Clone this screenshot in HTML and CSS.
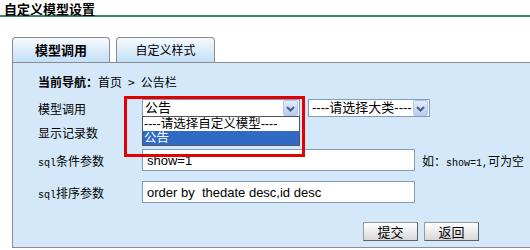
FILE: index.html
```html
<!DOCTYPE html>
<html lang="zh-CN">
<head>
    <meta charset="UTF-8">
    <meta name="viewport" content="width=device-width, initial-scale=1.0">
    <title>自定义模型设置</title>
    <link rel="stylesheet" href="styles.css">
</head>
<body>
    <h1 class="page-title">自定义模型设置</h1>

    <div class="tabs">
        <div class="tab active">模型调用</div>
        <div class="tab">自定义样式</div>
    </div>

    <div class="panel">
        <div class="nav"><b>当前导航：</b>首页<span class="sep">&gt;</span>公告栏</div>

        <div class="form">
            <div class="label">模型调用</div>
            <div class="field">
                <div class="select open">
                    <span>公告</span>
                    <span class="arrow">
                        <svg width="15" height="14" viewBox="0 0 15 14"><path d="M4 5 L7.5 8.5 L11 5" fill="none" stroke="#4a5f86" stroke-width="2"/></svg>
                    </span>
                    <ul class="options">
                        <li>----请选择自定义模型----</li>
                        <li class="selected">公告</li>
                    </ul>
                    <div class="mark"></div>
                </div>
                <div class="select wide">
                    <span>----请选择大类----</span>
                    <span class="arrow">
                        <svg width="15" height="14" viewBox="0 0 15 14"><path d="M4 5 L7.5 8.5 L11 5" fill="none" stroke="#4a5f86" stroke-width="2"/></svg>
                    </span>
                </div>
            </div>

            <div class="label">显示记录数</div>
            <div class="field">
                <input class="text short" type="text" value="10">
            </div>

            <div class="label"><span class="mono">sql</span>条件参数</div>
            <div class="field">
                <input class="text" type="text" value="show=1">
                <span class="hint">如：<span class="mono">show=1,</span>可为空</span>
            </div>

            <div class="label"><span class="mono">sql</span>排序参数</div>
            <div class="field">
                <input class="text" type="text" value="order by  thedate desc,id desc">
            </div>
        </div>

        <div class="actions">
            <button class="btn" type="button">提交</button>
            <button class="btn" type="button">返回</button>
        </div>
    </div>
</body>
</html>
```

FILE: styles.css
```css
body {
    margin: 0;
    font-family: "Noto Sans CJK SC", "Liberation Sans", sans-serif;
    font-size: 12px;
    color: #000;
    background: #fff;
    overflow: hidden;
}
.page-title {
    margin: 0;
    padding: 3px 4px 0;
    height: 12px;
    font-size: 13px;
    line-height: 12px;
    font-weight: bold;
    border-bottom: 2px solid #2e8a6c;
}
.tabs {
    display: flex;
    gap: 6px;
    margin: 20px 0 0 12px;
}
.tab {
    width: 97px;
    height: 24px;
    border: 1px solid #8c8c8c;
    border-bottom: none;
    border-radius: 4px 4px 0 0;
    background: linear-gradient(#f6fafe, #c3dff8);
    text-align: center;
    line-height: 24px;
}
.tab.active {
    width: 96px;
    font-weight: bold;
    font-size: 13px;
}
.panel {
    box-sizing: border-box;
    height: 186px;
    margin: 0 -20px 0 12px;
    padding: 9px 0 0 25px;
    border: 1px solid #8c8c8c;
    background: #d4e8fa;
}
.nav {
    line-height: 20px;
}
.sep {
    margin: 0 6px;
}
.form {
    display: grid;
    grid-template-columns: 104px auto;
    grid-template-rows: 24px 24px 32px 32px;
    align-items: center;
    margin-top: 4px;
}
.field {
    display: flex;
    align-items: center;
}
.mono {
    font-family: "Liberation Mono", monospace;
    font-size: 10px;
}
.select {
    position: relative;
    box-sizing: border-box;
    width: 158px;
    height: 18px;
    padding-left: 2px;
    border: 1px solid #7f9db9;
    background: #fff;
    font-family: "Liberation Sans", "Noto Sans CJK SC", sans-serif;
    font-size: 13px;
    line-height: 16px;
}
.select.wide {
    width: 122px;
    margin-left: 8px;
    padding-left: 3px;
}
.arrow {
    position: absolute;
    right: 1px;
    top: 0;
    box-sizing: border-box;
    width: 15px;
    height: 16px;
    border: 1px solid #b4c8e8;
    border-radius: 2px;
    background: linear-gradient(#e2ebfb, #b8cdf0);
}
.arrow svg {
    display: block;
    margin-top: 1px;
    margin-left: -1px;
}
.options {
    position: absolute;
    z-index: 2;
    left: -1px;
    top: 16px;
    box-sizing: border-box;
    width: 158px;
    margin: 0;
    padding: 0;
    list-style: none;
    border: 1px solid #555;
    background: #fff;
    font-size: 12.5px;
}
.options li {
    height: 14px;
    line-height: 14px;
    padding-left: 1px;
}
.options li.selected {
    background: #316ac5;
    color: #fff;
}
.mark {
    position: absolute;
    z-index: 3;
    left: -19px;
    top: -4px;
    box-sizing: border-box;
    width: 181px;
    height: 61px;
    border: 3px solid #e40000;
}
.text {
    box-sizing: border-box;
    width: 273px;
    height: 22px;
    padding: 0 4px;
    border: 1px solid #7f9db9;
    background: #fff;
    font-family: "Liberation Sans", Arial, sans-serif;
    font-size: 13px;
    color: #000;
}
.text.short {
    width: 60px;
}
.hint {
    margin-left: 7px;
}
.actions {
    display: flex;
    gap: 6px;
    margin: 14px 0 0 325px;
}
.btn {
    width: 55px;
    height: 19px;
    padding: 0;
    border: 1px solid #707070;
    border-color: #9a9a9a #606060 #606060 #9a9a9a;
    background: linear-gradient(#ffffff, #d8d8d8);
    font-family: "Noto Sans CJK SC", sans-serif;
    font-size: 13px;
    line-height: 17px;
    color: #000;
}
```
